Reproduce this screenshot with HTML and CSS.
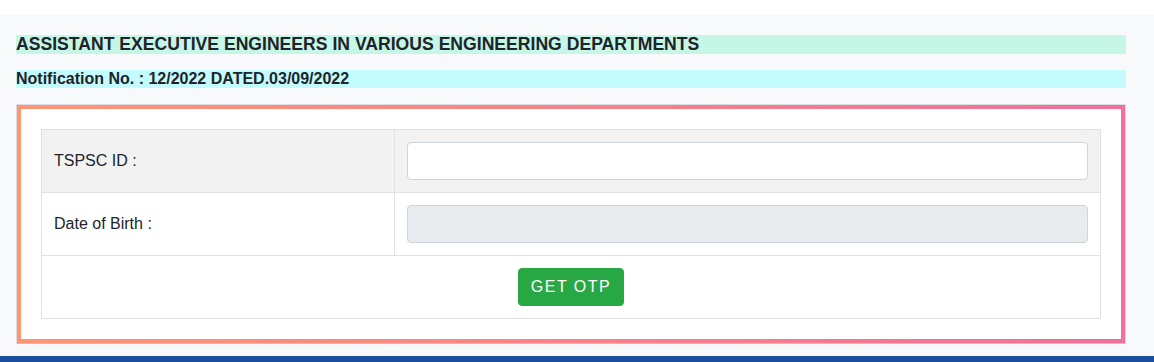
FILE: index.html
```html
<!DOCTYPE html>
<html lang="en">
<head>
<meta charset="utf-8">
<title>OTP</title>
<link rel="stylesheet" href="styles.css">
</head>
<body>
<div class="topstrip"></div>
<main class="page">
  <h4 class="title">ASSISTANT EXECUTIVE ENGINEERS IN VARIOUS ENGINEERING DEPARTMENTS</h4>
  <h5 class="notif">Notification No. : 12/2022 DATED.03/09/2022</h5>
  <div class="card">
    <div class="card-inner">
      <table class="form-table">
        <tr class="striped">
          <td class="label">TSPSC ID :</td>
          <td class="field"><input class="form-control" type="text"></td>
        </tr>
        <tr>
          <td class="label">Date of Birth :</td>
          <td class="field"><input class="form-control" type="text" disabled></td>
        </tr>
        <tr>
          <td class="actions" colspan="2"><button class="btn-otp" type="button">GET OTP</button></td>
        </tr>
      </table>
    </div>
  </div>
</main>
<footer class="footer"></footer>
</body>
</html>
```
FILE: styles.css
```css
* { box-sizing: border-box; }
html, body { margin: 0; padding: 0; }
body {
  font-family: "Liberation Sans", Arial, sans-serif;
  color: #212529;
  background: #ffffff;
  height: 362px;
  overflow: hidden;
}
.topstrip { height: 15px; background: #ffffff; }
.page {
  background: #f8f9fa;
  padding: 20px 28px 12px 16px;
}
.title, .notif {
  margin: 0 0 16px 0;
  font-weight: bold;
  line-height: 18.7px;
  color: #1e2429;
}
.title { background: #c6f6e6; font-size: 17.6px; }
.notif { background: #c4fbfc; font-size: 16px; line-height: 18px; margin-bottom: 16px; }
.card {
  border: 1px solid #dcdde0;
}
.card-inner {
  border: 4px solid transparent;
  border-image: linear-gradient(90deg, #ff9573, #f0709b) 1;
  background: #ffffff;
  padding: 20px;
  box-shadow: 0 1px 0 rgba(0,0,0,0.12);
}
.form-table {
  width: 100%;
  border-collapse: collapse;
  font-size: 16px;
}
.form-table td {
  border: 1px solid #dee2e6;
  padding: 12px;
  vertical-align: middle;
}
.form-table .label { width: 33.33%; }
.striped td { background: #f2f2f2; }
.form-control {
  display: block;
  width: 100%;
  height: 38px;
  border: 1px solid #ced4da;
  border-radius: 4px;
  background: #ffffff;
  font: inherit;
  padding: 6px 12px;
}
.form-control:disabled { background: #e9ecef; }
.actions { text-align: center; }
.btn-otp {
  height: 38px;
  padding: 6px 12px;
  border: 1px solid #28a745;
  border-radius: 4px;
  background: #28a745;
  color: #ffffff;
  font-family: "Liberation Sans", Arial, sans-serif;
  font-size: 16px;
  letter-spacing: 1.5px;
}
.footer {
  height: 20px;
  background: #1b4f9b;
}
```
